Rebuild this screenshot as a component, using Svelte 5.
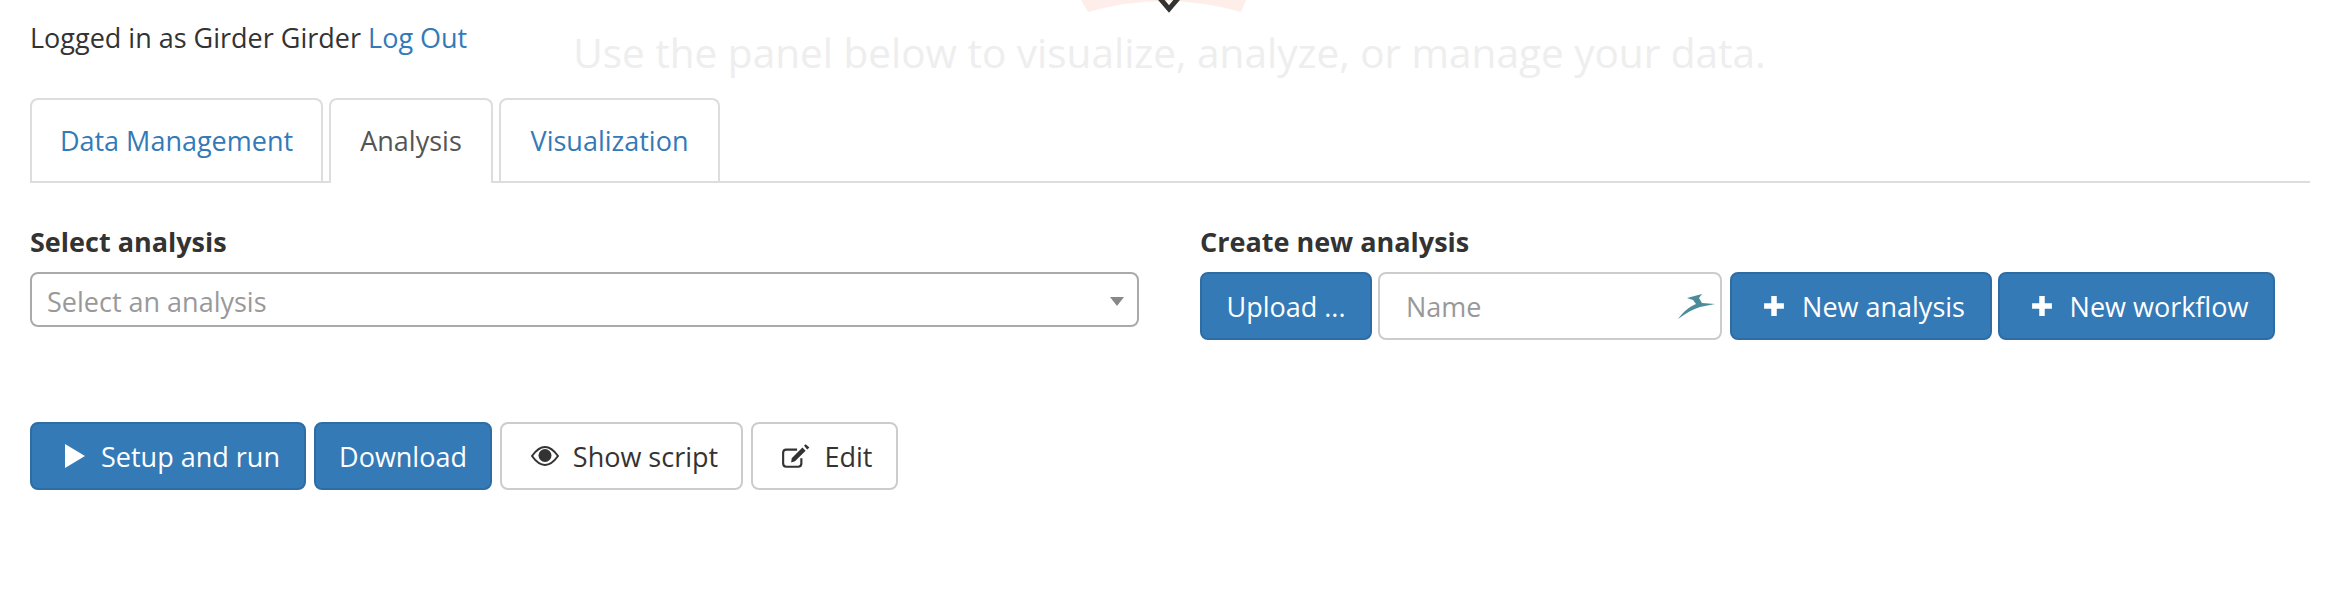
<script>
	const tabs = [
		{ label: 'Data Management', active: false },
		{ label: 'Analysis', active: true },
		{ label: 'Visualization', active: false }
	];
</script>

<!-- bit of the page logo scrolled off the top -->
<svg class="logo" width="170" height="14" viewBox="0 0 170 14" aria-hidden="true">
	<path d="M0 0 H165 L160 12 Q84 -10 7 12 Z" fill="#fdeee9" />
	<path d="M77 -4 L88 9 L99 -4" fill="none" stroke="#333" stroke-width="5" />
</svg>

<main>
	<header>
		<div class="login">Logged in as Girder Girder <a href="#logout">Log Out</a></div>
		<p class="faded">Use the panel below to visualize, analyze, or manage your data.</p>
	</header>

	<ul class="tabs">
		{#each tabs as tab}
			<li class:active={tab.active}><a href="#tab">{tab.label}</a></li>
		{/each}
	</ul>

	<section class="forms">
		<div class="col-select">
			<div class="label">Select analysis</div>
			<div class="select">
				<span>Select an analysis</span>
				<i class="caret"></i>
			</div>
		</div>

		<div class="col-create">
			<div class="label">Create new analysis</div>
			<div class="row">
				<button class="btn primary upload">Upload ...</button>
				<div class="name">
					<span>Name</span>
					<svg width="39" height="28" viewBox="0 0 39 28" aria-hidden="true">
						<path d="M1 27 C7 19 12 15 19 12 L16 8 L10 6 L25 2 L22 6 L25 11 L38 12 L23 15 C16 17 9 21 1 27 Z" fill="#4a8d99" />
					</svg>
				</div>
				<button class="btn primary new-a">
					<svg class="plus" width="22" height="22" viewBox="0 0 20 20" aria-hidden="true">
						<path d="M7.500 1 H12.500 V7.500 H19 V12.500 H12.500 V19 H7.500 V12.500 H1 V7.500 H7.500 Z" fill="#fff" />
					</svg>
					New analysis
				</button>
				<button class="btn primary new-w">
					<svg class="plus" width="22" height="22" viewBox="0 0 20 20" aria-hidden="true">
						<path d="M7.500 1 H12.500 V7.500 H19 V12.500 H12.500 V19 H7.500 V12.500 H1 V7.500 H7.500 Z" fill="#fff" />
					</svg>
					New workflow
				</button>
			</div>
		</div>
	</section>

	<section class="actions">
		<button class="btn primary run">
			<svg width="22" height="26" viewBox="0 0 22 26" aria-hidden="true"><path d="M1 1 L21 13 L1 25 Z" fill="#fff" /></svg>
			Setup and run
		</button>
		<button class="btn primary download">Download</button>
		<button class="btn script">
			<svg width="28" height="20" viewBox="0 0 28 20" aria-hidden="true">
				<path d="M1 10 C6 3 10 1 14 1 C18 1 22 3 27 10 C22 17 18 19 14 19 C10 19 6 17 1 10 Z" fill="none" stroke="#333" stroke-width="2" />
				<circle cx="14" cy="9.500" r="6.500" fill="#333" />
			</svg>
			Show script
		</button>
		<button class="btn edit">
			<svg width="30" height="26" viewBox="0 0 28 24" aria-hidden="true">
				<path d="M19 14 V19 Q19 22 16 22 H5 Q2 22 2 19 V9 Q2 6 5 6 H15" fill="none" stroke="#333" stroke-width="2" />
				<path d="M10 14 L20 4 L23 7 L13 17 L9.500 18 Z M21.500 2.500 L23 1 L26.500 4 L24.500 6 Z" fill="#333" />
			</svg>
			Edit
		</button>
	</section>
</main>

<style>
	:global(body) {
		margin: 0;
		background: #fff;
	}

	main {
		width: 2280px;
		margin-left: 30px;
		font-family: "Open Sans", "Liberation Sans", sans-serif;
		font-size: 27px;
		color: #333;
	}

	a {
		color: #337ab7;
		text-decoration: none;
	}

	.logo {
		position: absolute;
		left: 1081px;
		top: 0;
	}

	header {
		display: flex;
		height: 98px;
		box-sizing: border-box;
	}

	.login {
		padding-top: 20px;
		line-height: 36px;
		white-space: nowrap;
	}

	.faded {
		margin: 30px 0 0 106px;
		font-size: 40.500px;
		line-height: 46px;
		color: #eee;
		white-space: nowrap;
	}

	/* tabs sit on the line of the list */
	.tabs {
		display: flex;
		gap: 6px;
		height: 83px;
		margin: 0;
		padding: 0;
		list-style: none;
		border-bottom: 2px solid #ddd;
	}

	.tabs li {
		height: 85px;
		box-sizing: border-box;
		border: 2px solid #ddd;
		border-bottom: 0;
		border-radius: 8px 8px 0 0;
	}

	.tabs li.active {
		background: #fff;
	}

	.tabs li:first-child {
		width: 293px;
	}

	.tabs li:nth-child(2) {
		width: 164px;
	}

	.tabs li:nth-child(3) {
		width: 221px;
	}

	.tabs a {
		display: block;
		text-align: center;
		line-height: 82px;
	}

	.tabs .active a {
		color: #555;
	}

	.forms {
		display: flex;
		margin-top: 41px;
	}

	.label {
		font-weight: 700;
		line-height: 36px;
		margin-bottom: 12px;
	}

	.col-select {
		width: 1109px;
		margin-right: 61px;
	}

	.select {
		display: flex;
		align-items: center;
		justify-content: space-between;
		height: 55px;
		box-sizing: border-box;
		padding: 3px 13px 0 15px;
		border: 2px solid #aaa;
		border-radius: 8px;
		color: #999;
	}

	.caret {
		width: 0;
		height: 0;
		border-left: 7px solid transparent;
		border-right: 7px solid transparent;
		border-top: 9px solid #888;
	}

	.row {
		display: flex;
		gap: 6px;
	}

	.btn {
		display: inline-flex;
		align-items: center;
		justify-content: center;
		gap: 14px;
		height: 68px;
		box-sizing: border-box;
		padding: 0;
		border: 2px solid #ccc;
		border-radius: 8px;
		background: #fff;
		color: #333;
		font: inherit;
	}

	.primary {
		background: #337ab7;
		border-color: #2e6da4;
		color: #fff;
	}

	.upload {
		width: 172px;
	}

	.name {
		display: flex;
		align-items: center;
		justify-content: space-between;
		width: 344px;
		height: 68px;
		box-sizing: border-box;
		padding: 0 4px 0 26px;
		border: 2px solid #ccc;
		border-radius: 8px;
		color: #999;
	}

	.new-a {
		width: 262px;
		margin-left: 2px;
		padding-left: 6px;
		gap: 17px;
	}

	.new-w {
		width: 277px;
		padding-left: 6px;
		gap: 17px;
	}

	.actions {
		display: flex;
		gap: 8px;
		margin-top: 82px;
	}

	.run {
		width: 276px;
		padding-left: 8px;
		gap: 15px;
	}

	.download {
		width: 178px;
	}

	.script {
		width: 243px;
		padding-left: 6px;
	}

	.edit {
		width: 147px;
		padding-left: 4px;
		gap: 14px;
	}
</style>
